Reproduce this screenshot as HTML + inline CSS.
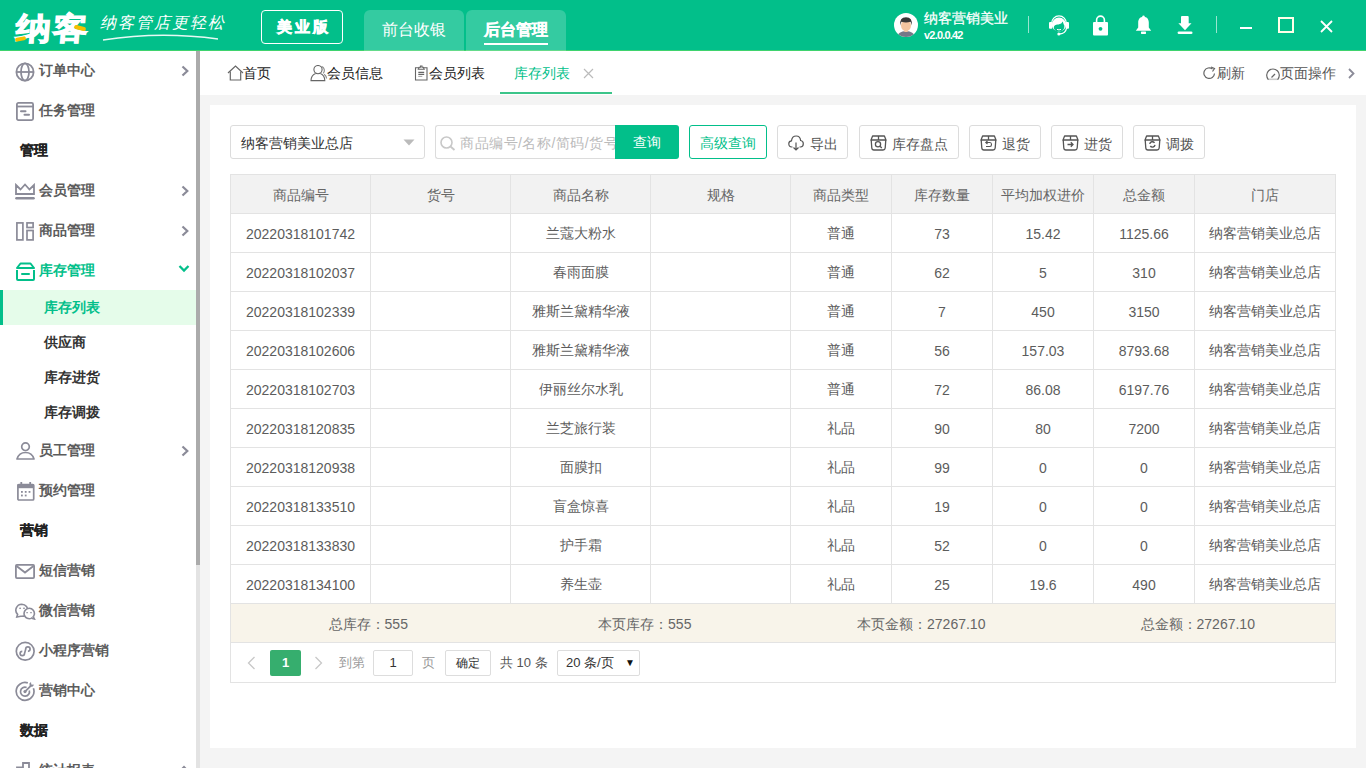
<!DOCTYPE html>
<html><head><meta charset="utf-8">
<style>
*{box-sizing:border-box;margin:0;padding:0}
html,body{width:1366px;height:768px;overflow:hidden;background:#f4f4f4;font-family:"Liberation Sans",sans-serif;color:#333}
.abs{position:absolute;white-space:nowrap}
#hdr{position:absolute;left:0;top:0;width:1366px;height:51px;background:#02bf8a;border-bottom:1px solid #3fd36e;z-index:5}
#side{position:absolute;left:0;top:0;width:196px;height:768px;background:#fff;overflow:hidden}
#sbar{position:absolute;left:196px;top:51px;width:4px;height:717px;background:#e3e3e3}
#sthumb{position:absolute;left:196px;top:51px;width:4px;height:514px;background:#ababab}
#tabs{position:absolute;left:200px;top:51px;width:1166px;height:44px;background:#fff}
#card{position:absolute;left:210px;top:105px;width:1146px;height:643px;background:#fff}
table{border-collapse:collapse;table-layout:fixed;position:absolute;left:20px;top:69px}
td,th{border:1px solid #e3e3e3;height:39px;text-align:center;font-size:14px;color:#5c5c5c;font-weight:normal;padding:2px 0 0;white-space:nowrap;overflow:hidden}
th{background:#f2f2f2;color:#666;padding-top:3px}
</style></head><body>
<div id="hdr">
 <div class="abs" style="left:17px;top:11px;font-size:31px;font-weight:bold;color:#fff;line-height:36px;letter-spacing:2px;-webkit-text-stroke:1px #fff;transform:scaleX(1.14) skewX(-4deg);transform-origin:0 0">纳客</div>
 <div class="abs" style="left:15px;top:37px;width:11px;height:4px;background:#f5c000;border-radius:2px;transform:rotate(-10deg)"></div>
 <div class="abs" style="left:74px;top:26px;width:12px;height:4px;background:#f5c000;border-radius:2px;transform:rotate(15deg)"></div>
 <div class="abs" style="left:100px;top:11px;font-family:'Liberation Serif',serif;font-size:16px;color:#fff;line-height:24px;letter-spacing:2px;font-style:italic">纳客管店更轻松</div>
 <svg class="abs" style="left:100px;top:33px" width="125" height="10"><path d="M3 7 Q60 -2 118 6" stroke="#fff" stroke-width="1.3" fill="none" opacity=".9"/></svg>
 <div class="abs" style="left:261px;top:10px;width:82px;height:34px;border:1.5px solid #fff;border-radius:4px;color:#fff;font-weight:bold;font-size:15px;line-height:32px;text-align:center;letter-spacing:3px;text-indent:3px;-webkit-text-stroke:0.7px #fff">美业版</div>
 <div class="abs" style="left:364px;top:10px;width:100px;height:41px;background:rgba(255,255,255,.2);border-radius:6px 6px 0 0;color:#fff;font-size:16px;line-height:40px;text-align:center">前台收银</div>
 <div class="abs" style="left:466px;top:10px;width:100px;height:41px;background:rgba(255,255,255,.2);border-radius:6px 6px 0 0;color:#fff;font-size:16px;font-weight:bold;line-height:40px;text-align:center;-webkit-text-stroke:.3px #fff">后台管理</div>
 <div class="abs" style="left:484px;top:43px;width:64px;height:2px;background:#fff"></div>
 <svg class="abs" style="left:894px;top:13px" width="24" height="24" viewBox="0 0 24 24"><circle cx="12" cy="12" r="12" fill="#fff"/><clipPath id="ac"><circle cx="12" cy="12" r="12"/></clipPath><g clip-path="url(#ac)"><path d="M2.5 25 Q3.5 18.5 12 18 Q20.5 18.5 21.5 25Z" fill="#757888"/><rect x="10.3" y="15" width="3.4" height="4" fill="#f3c5a0"/><ellipse cx="12" cy="12.6" rx="5" ry="5.4" fill="#f3c5a0"/><path d="M6.3 12.5 Q5.2 4.3 12 4.3 Q18.8 4.3 17.7 12.5 Q17 9.5 16.5 8.8 Q12 10 7.5 8.8 Q7 9.5 6.3 12.5Z" fill="#383838"/></g></svg>
 <div class="abs" style="left:924px;top:10px;font-size:14px;color:#fff;line-height:16px;-webkit-text-stroke:.25px #fff">纳客营销美业</div>
 <div class="abs" style="left:924px;top:29px;font-size:11px;color:#fff;line-height:12px;font-weight:bold;letter-spacing:-.8px">v2.0.0.42</div>
 <div class="abs" style="left:1028px;top:16px;width:1px;height:17px;background:rgba(255,255,255,.6)"></div>
 <div class="abs" style="left:1216px;top:16px;width:1px;height:17px;background:rgba(255,255,255,.6)"></div>
 <svg class="abs" style="left:1048px;top:13px" width="22" height="23" viewBox="0 0 22 23"><path d="M3.6 10.5 A7.4 7.6 0 0 1 18.4 10.5" stroke="#fff" stroke-width="1.3" fill="none"/><rect x="1" y="9" width="3.4" height="6.8" rx="1" fill="#fff"/><rect x="17.6" y="9" width="3.4" height="6.8" rx="1" fill="#fff"/><ellipse cx="11" cy="11.6" rx="7.2" ry="7" fill="#fff"/><path d="M5.8 14.2 Q6.5 11.2 10.5 11.6 Q13.8 11 14.8 8.6 Q15.6 11.8 16.4 12.8 Q16.6 18.2 11 18.6 Q5.8 18.4 5.8 14.2Z" fill="#02bf8a"/><path d="M9 16.4 Q11 17.4 13 16.4" stroke="#fff" stroke-width="1" fill="none"/><path d="M18.6 15 Q17.6 20.6 11.5 21" stroke="#fff" stroke-width="1.3" fill="none"/><circle cx="10.8" cy="21" r="1.5" fill="#fff"/></svg>
 <svg class="abs" style="left:1092px;top:15px" width="17" height="21" viewBox="0 0 17 21"><path d="M4.6 8 V5 A3.9 3.9 0 0 1 12.4 5 V8" stroke="#fff" stroke-width="1.6" fill="none"/><rect x="1" y="7" width="15" height="13.5" rx="1" fill="#fff"/><circle cx="8.5" cy="13.8" r="1.9" fill="#02bf8a"/></svg>
 <svg class="abs" style="left:1135px;top:15px" width="17" height="20" viewBox="0 0 17 20"><circle cx="8.5" cy="1.6" r="1.2" fill="#fff"/><path d="M8.5 1.8 C4.7 1.8 3.2 4.6 3.2 7.6 V12.5 L0.8 15.8 H16.2 L13.8 12.5 V7.6 C13.8 4.6 12.3 1.8 8.5 1.8Z" fill="#fff"/><rect x="6" y="16.5" width="5" height="2.4" rx="0.6" fill="#fff"/></svg>
 <svg class="abs" style="left:1177px;top:15px" width="16" height="20" viewBox="0 0 16 20"><rect x="4" y="0.9" width="7.7" height="8.5" rx="1" fill="#fff"/><path d="M1.4 8.2 H14.5 L8 15.3Z" fill="#fff"/><rect x="0.6" y="16.4" width="14.9" height="2.6" rx="1.3" fill="#fff"/></svg>
 <div class="abs" style="left:1240px;top:27px;width:12px;height:2px;background:#fff"></div>
 <div class="abs" style="left:1278px;top:17px;width:16px;height:16px;border:2px solid #ffffe8"></div>
 <svg class="abs" style="left:1320px;top:20px" width="13" height="13" viewBox="0 0 13 13"><path d="M1 1 L12 12 M12 1 L1 12" stroke="#fff" stroke-width="1.8"/></svg>
</div>

<div id="side"><div class="abs" style="left:39px;top:50px;line-height:40px;font-size:14px;font-weight:bold;color:#5c5c5c">订单中心</div><svg class="abs" style="left:15px;top:62px" width="20" height="20" viewBox="0 0 20 20"><g stroke="#8b8b98" stroke-width="1.8" fill="none"><circle cx="10" cy="10" r="8.6"/><ellipse cx="10" cy="10" rx="4" ry="8.6"/><path d="M1.5 10 H18.5"/></g></svg><svg class="abs" style="left:180px;top:65px" width="10" height="12" viewBox="0 0 10 12"><path d="M2.5 1.5 L7.3 6 L2.5 10.5" stroke="#8b8b98" stroke-width="2.2" fill="none"/></svg><div class="abs" style="left:39px;top:90px;line-height:40px;font-size:14px;font-weight:bold;color:#5c5c5c">任务管理</div><svg class="abs" style="left:16px;top:102px" width="18" height="19" viewBox="0 0 18 19"><g stroke="#8b8b98" stroke-width="1.8" fill="none"><rect x="0.9" y="0.9" width="16.2" height="17.2" rx="1.5"/><path d="M1 4.5 H17"/></g><rect x="4" y="8.2" width="6.5" height="2" rx="1" fill="#8b8b98"/><rect x="7.5" y="11.8" width="6.5" height="2" rx="1" fill="#8b8b98"/></svg><div class="abs" style="left:20px;top:130px;line-height:40px;font-size:14px;font-weight:bold;color:#222;-webkit-text-stroke:.2px #222">管理</div><div class="abs" style="left:39px;top:170px;line-height:40px;font-size:14px;font-weight:bold;color:#5c5c5c">会员管理</div><svg class="abs" style="left:15px;top:183px" width="20" height="17" viewBox="0 0 20 17"><g stroke="#8b8b98" stroke-width="1.8" fill="none"><path d="M1 2 L5.5 6.5 L10 1.5 L14.5 6.5 L19 2 V11 H1Z" stroke-linejoin="miter"/></g><rect x="0.2" y="14" width="19.6" height="2.4" rx="1.2" fill="#8b8b98"/></svg><svg class="abs" style="left:180px;top:185px" width="10" height="12" viewBox="0 0 10 12"><path d="M2.5 1.5 L7.3 6 L2.5 10.5" stroke="#8b8b98" stroke-width="2.2" fill="none"/></svg><div class="abs" style="left:39px;top:210px;line-height:40px;font-size:14px;font-weight:bold;color:#5c5c5c">商品管理</div><svg class="abs" style="left:16px;top:222px" width="18" height="19" viewBox="0 0 18 19"><g stroke="#8b8b98" stroke-width="1.7" fill="none"><rect x="0.9" y="0.9" width="6" height="17"/><rect x="11" y="0.9" width="6.1" height="4.6"/><rect x="11" y="8.5" width="6.1" height="9.4"/></g></svg><svg class="abs" style="left:180px;top:225px" width="10" height="12" viewBox="0 0 10 12"><path d="M2.5 1.5 L7.3 6 L2.5 10.5" stroke="#8b8b98" stroke-width="2.2" fill="none"/></svg><div class="abs" style="left:39px;top:250px;line-height:40px;font-size:14px;font-weight:bold;color:#02bf8a">库存管理</div><svg class="abs" style="left:16px;top:262px" width="19" height="19" viewBox="0 0 19 19"><g fill="none" stroke="#02bf8a" stroke-width="2"><path d="M1 6 L4.5 1.5 H14.5 L18 6Z" stroke-linejoin="round"/><path d="M1 8 V17 Q1 18 2 18 H17 Q18 18 18 17 V8"/></g><rect x="5" y="11" width="9" height="2" rx="1" fill="#02bf8a"/></svg><svg class="abs" style="left:178px;top:264px" width="12" height="10" viewBox="0 0 12 10"><path d="M1.5 2 L6 6.5 L10.5 2" stroke="#02bf8a" stroke-width="2.3" fill="none"/></svg><div class="abs" style="left:0;top:290px;width:196px;height:35px;background:#e5fcea"></div><div class="abs" style="left:0;top:290px;width:3px;height:35px;background:#02bf8a"></div><div class="abs" style="left:44px;top:290px;line-height:35px;font-size:14px;font-weight:bold;color:#02bf8a">库存列表</div><div class="abs" style="left:44px;top:325px;line-height:35px;font-size:14px;font-weight:bold;color:#333">供应商</div><div class="abs" style="left:44px;top:360px;line-height:35px;font-size:14px;font-weight:bold;color:#333">库存进货</div><div class="abs" style="left:44px;top:395px;line-height:35px;font-size:14px;font-weight:bold;color:#333">库存调拨</div><div class="abs" style="left:39px;top:430px;line-height:40px;font-size:14px;font-weight:bold;color:#5c5c5c">员工管理</div><svg class="abs" style="left:16px;top:442px" width="19" height="18" viewBox="0 0 19 18"><g stroke="#8b8b98" stroke-width="1.7" fill="none"><circle cx="9.5" cy="4.7" r="3.8"/><path d="M1 17 Q3 10.5 9.5 10.5 Q16 10.5 18 17Z" stroke-linejoin="round"/></g></svg><svg class="abs" style="left:180px;top:445px" width="10" height="12" viewBox="0 0 10 12"><path d="M2.5 1.5 L7.3 6 L2.5 10.5" stroke="#8b8b98" stroke-width="2.2" fill="none"/></svg><div class="abs" style="left:39px;top:470px;line-height:40px;font-size:14px;font-weight:bold;color:#5c5c5c">预约管理</div><svg class="abs" style="left:17px;top:482px" width="18" height="19" viewBox="0 0 18 19"><g stroke="#8b8b98" stroke-width="1.7" fill="none"><rect x="0.9" y="2.6" width="15.8" height="15.4" rx="1"/></g><rect x="0.5" y="2.2" width="16.6" height="4" fill="#8b8b98"/><rect x="3.4" y="0" width="1.8" height="3" fill="#8b8b98"/><rect x="12.3" y="0" width="1.8" height="3" fill="#8b8b98"/><g fill="#8b8b98"><rect x="4" y="9" width="1.8" height="1.8"/><rect x="7.8" y="9" width="1.8" height="1.8"/><rect x="11.6" y="9" width="1.8" height="1.8"/><rect x="4" y="12.6" width="1.8" height="1.8"/><rect x="7.8" y="12.6" width="1.8" height="1.8"/></g></svg><div class="abs" style="left:20px;top:510px;line-height:40px;font-size:14px;font-weight:bold;color:#222;-webkit-text-stroke:.2px #222">营销</div><div class="abs" style="left:39px;top:550px;line-height:40px;font-size:14px;font-weight:bold;color:#5c5c5c">短信营销</div><svg class="abs" style="left:15px;top:564px" width="20" height="15" viewBox="0 0 20 15"><g stroke="#8b8b98" stroke-width="1.8" fill="none"><rect x="0.9" y="0.9" width="18.2" height="13.2" rx="1"/><path d="M1.5 2 L10 8.5 L18.5 2"/></g></svg><div class="abs" style="left:39px;top:590px;line-height:40px;font-size:14px;font-weight:bold;color:#5c5c5c">微信营销</div><svg class="abs" style="left:15px;top:603px" width="21" height="17" viewBox="0 0 21 17"><g stroke="#8b8b98" stroke-width="1.6" fill="#fff"><path d="M6.8 1.2 A6 6 0 0 1 12.6 8.6 L11 12.2 Q8.5 13.6 5.8 13.2 L1.8 14 L2.6 11.4 A6 6 0 0 1 6.8 1.2Z"/><path d="M14.3 5.3 A5.2 5.2 0 1 1 12.2 15.3 Q10.2 14.6 9.4 12.3 A5.2 5.2 0 0 1 14.3 5.3Z"/><path d="M18.2 13.6 L19.4 16 L16.6 15.2"/></g><g fill="#8b8b98"><rect x="4.3" y="4.6" width="1.6" height="1.3" rx=".5"/><rect x="8.2" y="4.6" width="1.6" height="1.3" rx=".5"/><rect x="11.3" y="9" width="1.6" height="1.3" rx=".5"/><rect x="15.2" y="9" width="1.6" height="1.3" rx=".5"/></g></svg><div class="abs" style="left:39px;top:630px;line-height:40px;font-size:14px;font-weight:bold;color:#5c5c5c">小程序营销</div><svg class="abs" style="left:15px;top:641px" width="20" height="21" viewBox="0 0 20 21"><g stroke="#8b8b98" stroke-width="1.7" fill="none"><circle cx="10.2" cy="10.3" r="8.9"/><path d="M7.3 10.3 A2.2 2.2 0 1 0 9.5 12.5 L10.7 8.1 A2.2 2.2 0 1 1 12.9 10.3"/></g></svg><div class="abs" style="left:39px;top:670px;line-height:40px;font-size:14px;font-weight:bold;color:#5c5c5c">营销中心</div><svg class="abs" style="left:15px;top:681px" width="21" height="21" viewBox="0 0 21 21"><g stroke="#8b8b98" stroke-width="1.7" fill="none"><path d="M18.4 7.2 A8.9 8.9 0 1 1 12.8 1.9"/><path d="M14.3 9.4 A4.5 4.5 0 1 1 11.6 6.5"/><path d="M10 10.6 L16.5 4.2"/></g><circle cx="10" cy="10.6" r="1.6" fill="#8b8b98"/><path d="M16 1 L16.3 3.6 L19.2 3.8 L17.4 5.8 L14.8 5.5 L14.4 2.6Z" fill="#8b8b98"/></svg><div class="abs" style="left:20px;top:710px;line-height:40px;font-size:14px;font-weight:bold;color:#222;-webkit-text-stroke:.2px #222">数据</div><div class="abs" style="left:39px;top:750px;line-height:40px;font-size:14px;font-weight:bold;color:#5c5c5c">统计报表</div><svg class="abs" style="left:16px;top:762px" width="19" height="19" viewBox="0 0 19 19"><g stroke="#8b8b98" stroke-width="1.8" fill="none"><path d="M1 19 V5.5 H7 V1 H13 V19"/></g></svg><svg class="abs" style="left:178px;top:764px" width="12" height="10" viewBox="0 0 12 10"><path d="M1.5 7.5 L6 3 L10.5 7.5" stroke="#8b8b98" stroke-width="2" fill="none"/></svg></div>
<div id="sbar"></div><div id="sthumb"></div>
<div id="tabs"><svg class="abs" style="left:27px;top:14px" width="17" height="16" viewBox="0 0 17 16"><path d="M1 8 L8.5 1 L16 8" stroke="#666" stroke-width="1.2" fill="none"/><path d="M3.3 6.5 V15 H13.7 V6.5" stroke="#666" stroke-width="1.2" fill="none"/></svg><div class="abs" style="left:43px;top:0;line-height:44px;font-size:14px;color:#222">首页</div><svg class="abs" style="left:110px;top:14px" width="18" height="17" viewBox="0 0 18 17"><g stroke="#666" stroke-width="1.1" fill="none"><circle cx="8" cy="4.6" r="4.1"/><path d="M5.6 8.5 Q1 10.5 1 15.6 H14.8 Q14.8 10.5 10.4 8.5"/><path d="M11.6 1.4 Q14.6 2.6 14.3 6.2 Q14 7.8 13 8.4 M14.2 9.2 Q16.5 11 16.6 13.6" stroke="#888"/></g></svg><div class="abs" style="left:127px;top:0;line-height:44px;font-size:14px;color:#222">会员信息</div><svg class="abs" style="left:214px;top:14px" width="15" height="16" viewBox="0 0 15 16"><g stroke="#666" stroke-width="1.1" fill="none"><path d="M1.5 2.8 H13 V15 H1.5Z"/><path d="M4.3 4.3 L5.2 2.2 H6.5 V1 H8 V2.2 H9.3 L10.2 4.3Z" fill="#fff"/><path d="M4.3 7.4 H10.2 M4.3 9.4 H10.2"/><path d="M4.3 11.4 H8.3" stroke="#aaa"/></g></svg><div class="abs" style="left:229px;top:0;line-height:44px;font-size:14px;color:#222">会员列表</div><div class="abs" style="left:314px;top:0;line-height:44px;font-size:14px;color:#02bf8a">库存列表</div><svg class="abs" style="left:383px;top:17px" width="11" height="11" viewBox="0 0 11 11"><path d="M1 1 L10 10 M10 1 L1 10" stroke="#bbb" stroke-width="1.2"/></svg><div class="abs" style="left:300px;top:41px;width:112px;height:2px;background:#3cc58a"></div><svg class="abs" style="left:1003px;top:15px" width="13" height="14" viewBox="0 0 13 14"><path d="M11.5 7.5 A5.3 5.3 0 1 1 9.5 3" stroke="#666" stroke-width="1.2" fill="none"/><path d="M8 1 L11.5 2.5 L9.5 5.5" stroke="#666" stroke-width="1.2" fill="none"/></svg><div class="abs" style="left:1017px;top:0;line-height:44px;font-size:14px;color:#555">刷新</div><svg class="abs" style="left:1066px;top:16px" width="14" height="14" viewBox="0 0 14 14"><path d="M2.3 12.5 A6.3 6.3 0 1 1 11.7 12.5 Z" stroke="#666" stroke-width="1.2" fill="none"/><path d="M5.5 10.5 L9 7" stroke="#666" stroke-width="1.3"/><path d="M2.5 12.3 H11.5" stroke="#ccc" stroke-width="1.6"/></svg><div class="abs" style="left:1080px;top:0;line-height:44px;font-size:14px;color:#555">页面操作</div><svg class="abs" style="left:1147px;top:17px" width="9" height="11" viewBox="0 0 9 11"><path d="M2 1 L6.5 5.5 L2 10" stroke="#8b8b98" stroke-width="1.8" fill="none"/></svg></div>
<div id="card"><div class="abs" style="left:20px;top:20px;width:195px;height:34px;border:1px solid #dcdcdc;border-radius:3px"></div><div class="abs" style="left:31px;top:21px;line-height:34px;font-size:14px;color:#333">纳客营销美业总店</div><svg class="abs" style="left:193px;top:34px" width="12" height="7" viewBox="0 0 12 7"><path d="M0.5 0.5 H11.5 L6 6.5Z" fill="#bbb"/></svg><div class="abs" style="left:225px;top:20px;width:185px;height:34px;border:1px solid #dcdcdc;border-right:none;border-radius:3px 0 0 3px;overflow:hidden"></div><svg class="abs" style="left:230px;top:31px" width="16" height="15" viewBox="0 0 16 15"><circle cx="6.5" cy="6.5" r="5.5" stroke="#c8c8c8" stroke-width="1.6" fill="none"/><path d="M10.5 10.5 L14.5 14" stroke="#c8c8c8" stroke-width="1.8"/></svg><div class="abs" style="left:250px;top:21px;width:155px;overflow:hidden;line-height:34px;font-size:14px;color:#bbb;letter-spacing:.5px">商品编号/名称/简码/货号</div><div class="abs" style="left:405px;top:20px;width:64px;height:34px;background:#02bf8a;border-radius:0 3px 3px 0;color:#fff;font-size:14px;line-height:35px;text-align:center">查询</div><div class="abs" style="left:479px;top:20px;width:78px;height:34px;border:1px solid #02bf8a;border-radius:3px;color:#02bf8a;font-size:14px;line-height:34px;text-align:center">高级查询</div><div class="abs" style="left:567px;top:20px;width:71px;height:34px;border:1px solid #dcdcdc;border-radius:3px"></div><div class="abs" style="left:600px;top:22px;line-height:34px;font-size:14px;color:#555">导出</div><div class="abs" style="left:649px;top:20px;width:100px;height:34px;border:1px solid #dcdcdc;border-radius:3px"></div><div class="abs" style="left:682px;top:22px;line-height:34px;font-size:14px;color:#555">库存盘点</div><div class="abs" style="left:759px;top:20px;width:72px;height:34px;border:1px solid #dcdcdc;border-radius:3px"></div><div class="abs" style="left:792px;top:22px;line-height:34px;font-size:14px;color:#555">退货</div><div class="abs" style="left:841px;top:20px;width:72px;height:34px;border:1px solid #dcdcdc;border-radius:3px"></div><div class="abs" style="left:874px;top:22px;line-height:34px;font-size:14px;color:#555">进货</div><div class="abs" style="left:923px;top:20px;width:72px;height:34px;border:1px solid #dcdcdc;border-radius:3px"></div><div class="abs" style="left:956px;top:22px;line-height:34px;font-size:14px;color:#555">调拨</div><svg class="abs" style="left:578px;top:30px" width="16" height="16" viewBox="0 0 16 16"><path d="M4.5 12 H3.8 Q0.8 12 0.8 8.8 Q0.8 6 3.5 5.8 Q4 1 8.2 1 Q12.2 1 12.6 5.5 Q15.3 5.8 15.3 8.8 Q15.3 12 12.5 12 H11.5" stroke="#555" stroke-width="1.2" fill="none"/><path d="M8 7.5 V15 M5.5 12.5 L8 15 L10.5 12.5" stroke="#555" stroke-width="1.2" fill="none"/></svg><svg class="abs" style="left:660px;top:30px" width="17" height="16" viewBox="0 0 17 16"><g stroke="#555" stroke-width="1.3" fill="none" stroke-linejoin="round"><path d="M2.6 1 H14.4 L16 5 H1Z"/><path d="M8.5 1 V5"/><path d="M1.2 5 L1.8 13 Q2 15 4 15 H13 Q15 15 15.2 13 L15.8 5"/></g><circle cx="8" cy="9.3" r="2.6" stroke="#555" stroke-width="1.3" fill="none"/><path d="M10 11.3 L11.8 13" stroke="#555" stroke-width="1.3"/></svg><svg class="abs" style="left:770px;top:30px" width="17" height="16" viewBox="0 0 17 16"><g stroke="#555" stroke-width="1.3" fill="none" stroke-linejoin="round"><path d="M2.6 1 H14.4 L16 5 H1Z"/><path d="M8.5 1 V5"/><path d="M1.2 5 L1.8 13 Q2 15 4 15 H13 Q15 15 15.2 13 L15.8 5"/></g><path d="M6.5 7.5 H10 Q11.5 7.5 11.5 9.5 Q11.5 11.5 10 11.5 H6 M7.5 6 L5.8 7.5 L7.5 9" stroke="#555" stroke-width="1.1" fill="none"/></svg><svg class="abs" style="left:852px;top:30px" width="17" height="16" viewBox="0 0 17 16"><g stroke="#555" stroke-width="1.3" fill="none" stroke-linejoin="round"><path d="M2.6 1 H14.4 L16 5 H1Z"/><path d="M8.5 1 V5"/><path d="M1.2 5 L1.8 13 Q2 15 4 15 H13 Q15 15 15.2 13 L15.8 5"/></g><path d="M5.5 9.5 H11 M8.8 7.3 L11 9.5 L8.8 11.7" stroke="#555" stroke-width="1.3" fill="none"/></svg><svg class="abs" style="left:934px;top:30px" width="17" height="16" viewBox="0 0 17 16"><g stroke="#555" stroke-width="1.3" fill="none" stroke-linejoin="round"><path d="M2.6 1 H14.4 L16 5 H1Z"/><path d="M8.5 1 V5"/><path d="M1.2 5 L1.8 13 Q2 15 4 15 H13 Q15 15 15.2 13 L15.8 5"/></g><path d="M5.8 9 A2.6 2.6 0 0 1 10.5 7.8 M11 9.8 A2.6 2.6 0 0 1 6.3 11" stroke="#555" stroke-width="1.4" fill="none"/></svg><table style="width:1106px"><colgroup><col style="width:140px"><col style="width:140px"><col style="width:140px"><col style="width:140px"><col style="width:101px"><col style="width:101px"><col style="width:101px"><col style="width:101px"><col style="width:141px"></colgroup><tr><th>商品编号</th><th>货号</th><th>商品名称</th><th>规格</th><th>商品类型</th><th>库存数量</th><th>平均加权进价</th><th>总金额</th><th>门店</th></tr><tr><td>20220318101742</td><td></td><td>兰蔻大粉水</td><td></td><td>普通</td><td>73</td><td>15.42</td><td>1125.66</td><td>纳客营销美业总店</td></tr><tr><td>20220318102037</td><td></td><td>春雨面膜</td><td></td><td>普通</td><td>62</td><td>5</td><td>310</td><td>纳客营销美业总店</td></tr><tr><td>20220318102339</td><td></td><td>雅斯兰黛精华液</td><td></td><td>普通</td><td>7</td><td>450</td><td>3150</td><td>纳客营销美业总店</td></tr><tr><td>20220318102606</td><td></td><td>雅斯兰黛精华液</td><td></td><td>普通</td><td>56</td><td>157.03</td><td>8793.68</td><td>纳客营销美业总店</td></tr><tr><td>20220318102703</td><td></td><td>伊丽丝尔水乳</td><td></td><td>普通</td><td>72</td><td>86.08</td><td>6197.76</td><td>纳客营销美业总店</td></tr><tr><td>20220318120835</td><td></td><td>兰芝旅行装</td><td></td><td>礼品</td><td>90</td><td>80</td><td>7200</td><td>纳客营销美业总店</td></tr><tr><td>20220318120938</td><td></td><td>面膜扣</td><td></td><td>礼品</td><td>99</td><td>0</td><td>0</td><td>纳客营销美业总店</td></tr><tr><td>20220318133510</td><td></td><td>盲盒惊喜</td><td></td><td>礼品</td><td>19</td><td>0</td><td>0</td><td>纳客营销美业总店</td></tr><tr><td>20220318133830</td><td></td><td>护手霜</td><td></td><td>礼品</td><td>52</td><td>0</td><td>0</td><td>纳客营销美业总店</td></tr><tr><td>20220318134100</td><td></td><td>养生壶</td><td></td><td>礼品</td><td>25</td><td>19.6</td><td>490</td><td>纳客营销美业总店</td></tr></table><div class="abs" style="left:20px;top:499px;width:1106px;height:39px;background:#f8f4ea;border:1px solid #e3e3e3;border-top:none"></div><div class="abs" style="left:20.0px;top:500px;width:276.5px;text-align:center;line-height:39px;font-size:14px;color:#666">总库存：555</div><div class="abs" style="left:296.5px;top:500px;width:276.5px;text-align:center;line-height:39px;font-size:14px;color:#666">本页库存：555</div><div class="abs" style="left:573.0px;top:500px;width:276.5px;text-align:center;line-height:39px;font-size:14px;color:#666">本页金额：27267.10</div><div class="abs" style="left:849.5px;top:500px;width:276.5px;text-align:center;line-height:39px;font-size:14px;color:#666">总金额：27267.10</div><div class="abs" style="left:20px;top:537px;width:1106px;height:41px;border:1px solid #e3e3e3;border-top:none"></div><svg class="abs" style="left:36px;top:551px" width="10" height="14" viewBox="0 0 10 14"><path d="M8.5 1 L2.5 7 L8.5 13" stroke="#c8c8c8" stroke-width="1.3" fill="none"/></svg><div class="abs" style="left:60px;top:545px;width:31px;height:26px;background:#36ae6e;border-radius:2px;color:#fff;font-size:13px;font-weight:bold;line-height:26px;text-align:center">1</div><svg class="abs" style="left:104px;top:551px" width="10" height="14" viewBox="0 0 10 14"><path d="M1.5 1 L7.5 7 L1.5 13" stroke="#c8c8c8" stroke-width="1.3" fill="none"/></svg><div class="abs" style="left:129px;top:545px;line-height:26px;font-size:13px;color:#999">到第</div><div class="abs" style="left:163px;top:545px;width:40px;height:26px;border:1px solid #ddd;border-radius:2px;text-align:center;line-height:24px;font-size:13px;color:#333">1</div><div class="abs" style="left:212px;top:545px;line-height:26px;font-size:13px;color:#999">页</div><div class="abs" style="left:235px;top:545px;width:46px;height:26px;border:1px solid #ddd;border-radius:2px;text-align:center;line-height:24px;font-size:12px;color:#333">确定</div><div class="abs" style="left:290px;top:545px;line-height:26px;font-size:13px;color:#555">共 10 条</div><div class="abs" style="left:347px;top:545px;width:83px;height:26px;border:1px solid #ddd;border-radius:2px;line-height:24px;font-size:13px;color:#333;padding-left:8px">20 条/页</div><div class="abs" style="left:415px;top:545px;line-height:26px;font-size:10px;color:#111">▼</div></div>
</body></html>
